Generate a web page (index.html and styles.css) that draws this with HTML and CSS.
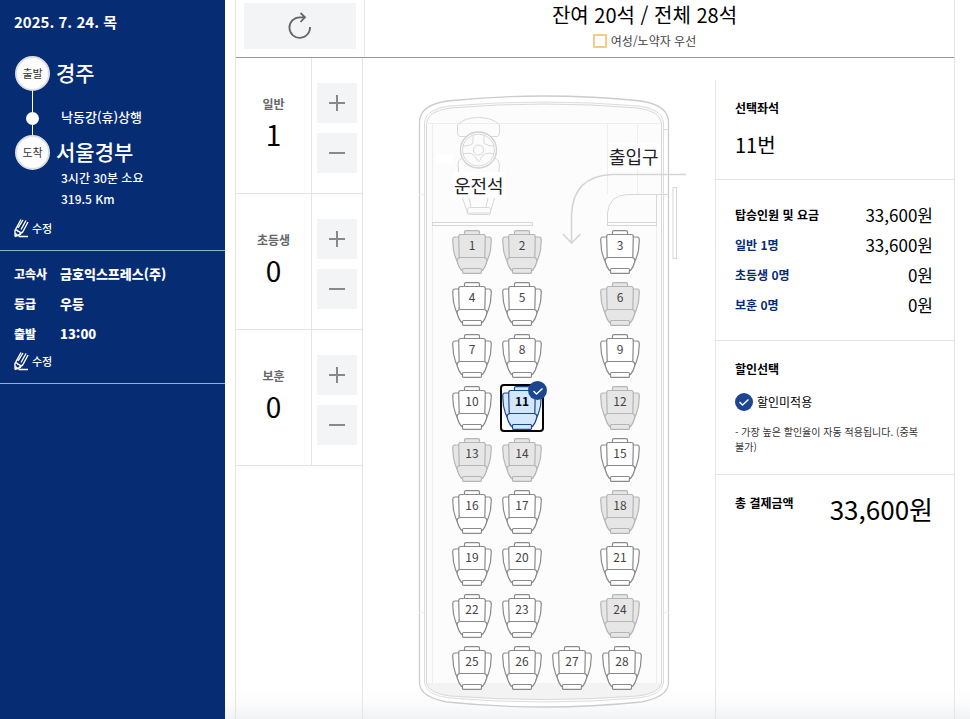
FILE: index.html
```html
<!DOCTYPE html>
<html lang="ko">
<head>
<meta charset="UTF-8">
<meta name="viewport" content="width=device-width, initial-scale=1.0">
<title>좌석선택</title>
<link rel="stylesheet" href="styles.css">
</head>
<body>
    <!-- 공통 아이콘 -->
    <svg class="sprite" aria-hidden="true">
        <symbol id="seat" viewBox="0 0 40 44">
            <path d="M8 7H3Q.7 7 .7 10L1.500 20Q3 28 6.500 34L9 38L10 30H30L31 38L33.500 34Q37 28 38.500 20L39.300 10Q39.300 7 37 7H32Z"/>
            <path d="M12.500 4.500V2Q12.500.7 14 .7H26Q27.500.7 27.500 2V4.500"/>
            <path d="M8.500 4.500H31.500Q33.300 4.500 33.300 7L32.800 27.500H7.200L6.700 7Q6.700 4.500 8.500 4.500Z"/>
            <path d="M8 27.500H32Q35.500 28 34.700 32Q33.500 37 30.500 40.500H9.500Q6.500 37 5.300 32Q4.500 28 8 27.500Z"/>
            <rect x="10.500" y="38.500" width="19" height="4.800" rx="1"/>
        </symbol>
        <symbol id="pencil" viewBox="0 0 15 20">
            <path d="M1 18.500V12.500L7 1.500M4 10L9 2M7 11.500L12 2.500M9 13.500L14 4M1 12.500Q3.500 11.500 4 13.500Q6.500 13 6 15.500Q8 15 9 13.500M1 18.500L7 16M4.500 18.500H14M1.500 15.500L3.500 17.500"/>
        </symbol>
    </svg>

    <div class="wrap">
        <aside class="trip">
            <section class="trip-box">
                <p class="date">2025. 7. 24. 목</p>
                <ul class="route">
                    <li><span class="stop">출발</span><strong>경주</strong></li>
                    <li class="via"><span class="dot"></span><span class="via-name">낙동강(휴)상행</span></li>
                    <li>
                        <span class="stop">도착</span>
                        <div>
                            <strong>서울경부</strong>
                            <p class="route-info">3시간 30분 소요<br>319.5 Km</p>
                        </div>
                    </li>
                </ul>
                <a href="#" class="edit"><svg><use href="#pencil"/></svg>수정</a>
            </section>
            <section class="trip-box detail">
                <dl>
                    <dt>고속사</dt><dd>금호익스프레스(주)</dd>
                    <dt>등급</dt><dd>우등</dd>
                    <dt>출발</dt><dd>13:00</dd>
                </dl>
                <a href="#" class="edit"><svg><use href="#pencil"/></svg>수정</a>
            </section>
        </aside>

        <main class="content">
            <header class="top">
                <div class="refresh">
                    <button type="button" aria-label="새로고침">
                        <svg width="24" height="28" viewBox="0 0 24 28"><path d="M22 15A10.300 10.300 0 1 1 11.700 5.300H17M12.500 1L17 5.300L12.500 10"/></svg>
                    </button>
                </div>
                <div class="remain">
                    <h1>잔여 20석 / 전체 28석</h1>
                    <p><span class="swatch"></span>여성/노약자 우선</p>
                </div>
            </header>

            <div class="columns">
                <div class="people">
                    <div class="person">
                        <div class="count"><span>일반</span><output>1</output></div>
                        <div class="buttons">
                            <button type="button" class="plus" aria-label="일반 추가"></button>
                            <button type="button" class="minus" aria-label="일반 빼기"></button>
                        </div>
                    </div>
                    <div class="person">
                        <div class="count"><span>초등생</span><output>0</output></div>
                        <div class="buttons">
                            <button type="button" class="plus" aria-label="초등생 추가"></button>
                            <button type="button" class="minus" aria-label="초등생 빼기"></button>
                        </div>
                    </div>
                    <div class="person">
                        <div class="count"><span>보훈</span><output>0</output></div>
                        <div class="buttons">
                            <button type="button" class="plus" aria-label="보훈 추가"></button>
                            <button type="button" class="minus" aria-label="보훈 빼기"></button>
                        </div>
                    </div>
                </div>

                <div class="stage">
                    <div class="bus">
                        <svg class="bus-body" viewBox="0 0 250 613" aria-hidden="true">
                            <!-- 차체 -->
                            <path class="shell" d="M.5 27Q1 10 28 6Q125-4 222 6Q249 10 249.500 27V588Q249 602 222 607Q125 617 28 607Q1 602 .5 588Z"/>
                            <path class="inner" d="M5.500 27Q7 14 30 11Q125 3 220 11Q243 14 244.500 27V588Q243 600 220 603Q125 611 30 603Q7 600 5.500 588Z"/>
                            <path class="rear" d="M7.500 588H242.500Q241 598 219 601Q125 608 31 601Q9 598 7.500 588Z"/>
                            <path class="line" d="M7.500 588V28Q9 16 31 13Q125 5 219 13Q241 16 242.500 28V588Q241 598 219 601Q125 608 31 601Q9 598 7.500 588"/>
                            <path class="faint" d="M7 28.500H242M13.500 28V588M237.500 130V588M188.500 28V99M218.500 28V99M0 99.500H7M0 517.500H7M243 517.500H250"/>
                            <path class="line" d="M245 34.500H250M237 99.500H250"/>
                            <!-- 운전석 -->
                            <path class="line" d="M41 41.500Q38.500 41 38.500 38V30Q45 22.500 59.500 22.500T80.500 30V38Q80.500 41 78 41.500Z"/>
                            <path class="line" d="M42 63.500Q39 65 39 70L41 95L48.500 118H71L78 95L80.500 70Q80 65 77 63.500ZM50 103L52 112M69 103L67 112"/>
                            <rect class="line" x="48.500" y="112.500" width="23" height="7" rx="2"/>
                            <circle class="wheel" cx="59.500" cy="55" r="18"/>
                            <circle class="line" cx="59.500" cy="55" r="16"/>
                            <path class="line" d="M54 40V48Q51 51 43.500 51M65 40V48Q68 51 75.500 51M44 59Q54 56 57 63T62 63Q65 56 75 59"/>
                            <circle class="line" cx="59.500" cy="55" r="5"/>
                            <rect class="blank" x="17" y="59" width="17" height="9"/>
                            <!-- 칸막이, 출입문 -->
                            <rect class="line" x="13.500" y="127.500" width="100" height="3"/>
                            <rect class="line" x="188.500" y="127.500" width="49" height="3"/>
                            <path class="line" d="M188.500 127V118Q190 100 209 99.500H237.500V127"/>
                            <rect class="line" x="254" y="92.500" width="3.500" height="71"/>
                            <path class="arrow" d="M267 79.500H193Q154 81 152.500 120V148M144 139L152.500 148L161.500 139"/>
                        </svg>
                        <span class="tag driver">운전석</span>
                        <span class="tag door">출입구</span>
                        <div class="seats"></div>
                    </div>
                </div>

                <div class="summary">
                    <section>
                        <h2>선택좌석</h2>
                        <p class="picked">11번</p>
                    </section>
                    <section class="fares">
                        <dl>
                            <dt class="total">탑승인원 및 요금</dt><dd>33,600원</dd>
                            <dt>일반 1명</dt><dd>33,600원</dd>
                            <dt>초등생 0명</dt><dd>0원</dd>
                            <dt>보훈 0명</dt><dd>0원</dd>
                        </dl>
                    </section>
                    <section class="discount">
                        <h2>할인선택</h2>
                        <label><input type="radio" name="discount" checked>할인미적용</label>
                        <p class="note">- 가장 높은 할인율이 자동 적용됩니다. (중복 불가)</p>
                    </section>
                    <section class="pay">
                        <h2>총 결제금액</h2>
                        <strong>33,600원</strong>
                    </section>
                </div>
            </div>
        </main>
    </div>

    <script>
        // 좌석 배치 (0은 통로)
        const rows = [
            [1, 2, 0, 3], [4, 5, 0, 6], [7, 8, 0, 9],
            [10, 11, 0, 12], [13, 14, 0, 15], [16, 17, 0, 18],
            [19, 20, 0, 21], [22, 23, 0, 24], [25, 26, 27, 28]
        ];
        const sold = [1, 2, 6, 12, 13, 14, 18, 24];
        const selected = [11];

        // 좌석 하나의 마크업
        function seatHtml(no) {
            if (no === 0) {
                return '<span class="aisle"></span>';
            }
            const isSold = sold.includes(no);
            const isSelected = selected.includes(no);
            return `<label class="seat${isSold ? ' sold' : ''}">
                <input type="checkbox" name="seat" value="${no}"${isSold ? ' disabled' : ''}${isSelected ? ' checked' : ''}>
                <svg><use href="#seat"/></svg>
                <span class="no">${no}</span>
            </label>`;
        }

        document.querySelector('.seats').innerHTML = rows
            .map(row => `<div class="row">${row.map(seatHtml).join('')}</div>`)
            .join('');
    </script>
</body>
</html>
```
FILE: styles.css
```css
* {
    box-sizing: border-box;
}
body, h1, h2, p, ul, dl, dd {
    margin: 0;
    padding: 0;
}
body {
    font-family: "Noto Sans CJK KR", sans-serif;
    font-size: 12px;
    line-height: 20px;
    color: #000;
    background: #fff;
}
button, input {
    font: inherit;
    margin: 0;
}
button {
    border: 0;
    padding: 0;
    background: #f3f4f6;
    cursor: pointer;
}
.sprite {
    display: none;
}
.wrap {
    display: flex;
    min-height: 100vh;
    background: linear-gradient(to top, #f1f2f4, #fbfbfc 14px, #fff 32px);
}

/* 왼쪽 여정 정보 */
.trip {
    flex: 0 0 225px;
    background: #062c74;
    color: #fff;
}
.trip-box {
    padding: 12px 14px;
    border-bottom: 1px solid #8fb5cc;
}
.date {
    font-size: 15px;
    font-weight: 700;
}
.route {
    list-style: none;
    margin-top: 24px;
}
.route li {
    display: flex;
    gap: 6px;
    padding-left: 1px;
}
.stop {
    flex: none;
    width: 35px;
    height: 35px;
    border: 2px solid #ddd;
    border-radius: 50%;
    background: #fff;
    color: #333;
    font-size: 11px;
    line-height: 31px;
    text-align: center;
}
.route strong {
    display: block;
    font-size: 21px;
    font-weight: 500;
    line-height: 32px;
}
.route .via {
    height: 44px;
    padding-top: 16px;
    gap: 22px;
    padding-left: 12px;
    background: linear-gradient(#fff, #fff) 18px 0 / 1px 100% no-repeat;
}
.dot {
    width: 13px;
    height: 13px;
    margin-top: 5px;
    border-radius: 50%;
    background: #fff;
}
.via-name {
    font-size: 13px;
    font-weight: 500;
}
.route-info {
    padding-left: 5px;
    font-weight: 500;
    line-height: 21px;
}
.edit {
    display: flex;
    align-items: center;
    gap: 3px;
    height: 20px;
    margin-top: 9px;
    color: #fff;
    font-size: 11px;
    font-weight: 500;
    text-decoration: none;
}
.edit svg {
    width: 15px;
    height: 20px;
    fill: none;
    stroke: #fff;
    stroke-width: 1.4;
}
.detail {
    padding-top: 8px;
}
.detail dl {
    display: grid;
    grid-template-columns: 46px 1fr;
    line-height: 30px;
    font-weight: 900;
}
.detail dd {
    font-size: 13px;
}
.detail .edit {
    margin-top: 2px;
}

/* 본문 */
.content {
    flex: 1;
    display: flex;
    flex-direction: column;
    margin: 0 15px 0 10px;
    border: 1px solid #e5e5e5;
    border-width: 0 1px;
}
.top {
    display: flex;
    border-bottom: 1px solid #999;
}
.refresh {
    flex: 0 0 129px;
    padding: 3px 8px 8px;
    border-right: 1px solid #e5e5e5;
}
.refresh button {
    display: flex;
    align-items: center;
    justify-content: center;
    width: 100%;
    height: 46px;
}
.refresh svg {
    fill: none;
    stroke: #666;
    stroke-width: 1.8;
}
.remain {
    flex: 1;
    padding: 1px 30px 0 0;
    text-align: center;
}
.remain h1 {
    font-size: 20px;
    font-weight: 400;
    line-height: 28px;
}
.remain p {
    display: flex;
    align-items: center;
    justify-content: center;
    gap: 4px;
    color: #444;
    line-height: 24px;
}
.swatch {
    width: 14px;
    height: 14px;
    border: 2px solid #f8cb85;
    border-radius: 1px;
}
.columns {
    flex: 1;
    display: flex;
}

/* 인원 선택 */
.people {
    flex: 0 0 127px;
    border-right: 1px solid #e5e5e5;
}
.person {
    display: flex;
    border-bottom: 1px solid #e5e5e5;
}
.count {
    flex: 1;
    padding-top: 36px;
    border-right: 1px solid #e5e5e5;
    text-align: center;
}
.count span {
    display: block;
    color: #666;
    font-weight: 700;
}
.count output {
    display: block;
    font-size: 28px;
    line-height: 40px;
}
.buttons {
    display: flex;
    flex-direction: column;
    gap: 10px;
    padding: 25px 5px 20px;
}
.buttons button {
    width: 40px;
    height: 40px;
    background-image: linear-gradient(#888, #888), linear-gradient(#888, #888);
    background-position: center;
    background-repeat: no-repeat;
}
.buttons .plus {
    background-size: 16px 2px, 2px 16px;
}
.buttons .minus {
    background-size: 16px 2px, 0 0;
}

/* 버스 좌석 */
.stage {
    flex: 1;
    padding: 37px 0 0 10px;
}
.bus {
    position: relative;
    width: 250px;
    margin: 0 auto;
    padding: 135px 0 18px 33px;
}
.bus-body {
    position: absolute;
    top: 0;
    left: 0;
    width: 100%;
    height: 613px;
    overflow: visible;
    fill: none;
}
.shell {
    fill: #fff;
    stroke: #ccc;
    stroke-width: 1.3;
}
.inner {
    fill: #fcfcfc;
    stroke: #ddd;
}
.rear {
    fill: #f3f3f3;
}
.line {
    stroke: #d8d8d8;
}
.faint {
    stroke: #eee;
}
.wheel {
    fill: #fcfcfc;
    stroke: #d0d0d0;
    stroke-width: 1.3;
}
.blank {
    fill: #fff;
}
.arrow {
    stroke: #d5d5d5;
    stroke-width: 1.6;
}
.tag {
    position: absolute;
    padding: 0 1px;
    background: #fff;
    color: #222;
    font-size: 18px;
    line-height: 26px;
}
.driver {
    top: 77px;
    left: 34px;
}
.door {
    top: 48px;
    left: 189px;
}
.seats {
    position: relative;
    display: flex;
    flex-direction: column;
    gap: 8px;
}
.row {
    display: flex;
    gap: 10px;
}
.aisle {
    width: 38px;
}
.seat {
    position: relative;
    width: 40px;
    height: 44px;
    color: #444;
    cursor: pointer;
}
.seat input {
    position: absolute;
    opacity: 0;
}
.seat svg {
    display: block;
    width: 40px;
    height: 44px;
    fill: #fff;
    stroke: #8a8a8a;
    stroke-width: 1.2;
}
.seat .no {
    position: absolute;
    top: 5px;
    left: 0;
    width: 100%;
    text-align: center;
}
.sold {
    cursor: default;
}
.sold svg {
    fill: #e6e6e6;
    stroke: #b5b5b5;
}
.seat:has(:checked) {
    background: #fff;
    border-radius: 2px;
    box-shadow: 0 0 0 2px #000;
    color: #000;
    font-weight: 700;
}
.seat:has(:checked) svg {
    fill: #d3e7ff;
    stroke: #1c4690;
}
.seat:has(:checked)::after {
    content: "";
    position: absolute;
    top: -5px;
    right: -5px;
    width: 19px;
    height: 19px;
    border-radius: 50%;
}
.seat:has(:checked)::after, .discount input {
    background: #1c4690 url("data:image/svg+xml,%3Csvg xmlns='http://www.w3.org/2000/svg' viewBox='0 0 18 18'%3E%3Cpath d='M4.500 9l3 3L13.500 6.500' fill='none' stroke='%23fff' stroke-width='1.400'/%3E%3C/svg%3E") center / 18px 18px no-repeat;
}

/* 오른쪽 결제 정보 */
.summary {
    flex: 0 0 239px;
    margin-top: 22px;
    border-left: 1px solid #e5e5e5;
}
.summary section {
    padding: 18px 21px 20px 19px;
    border-bottom: 1px solid #e5e5e5;
}
.summary h2 {
    font-size: 12px;
    font-weight: 700;
}
.picked {
    margin-top: 13px;
    font-size: 20px;
    line-height: 28px;
}
.summary .fares {
    padding-top: 20px;
}
.fares dl {
    display: grid;
    grid-template-columns: 1fr auto;
    line-height: 30px;
}
.fares dt {
    color: #062c74;
    font-weight: 700;
}
.fares .total {
    color: #000;
}
.fares dd {
    font-size: 17px;
    text-align: right;
}
.discount label {
    display: flex;
    align-items: center;
    gap: 4px;
    margin-top: 13px;
}
.discount input {
    appearance: none;
    width: 18px;
    height: 18px;
    border-radius: 50%;
}
.note {
    margin-top: 12px;
    color: #333;
    font-size: 10px;
    line-height: 15px;
    word-break: keep-all;
}
.summary .pay {
    display: flex;
    justify-content: space-between;
    border-bottom: 0;
}
.pay strong {
    font-size: 26px;
    font-weight: 400;
    line-height: 32px;
}
```
